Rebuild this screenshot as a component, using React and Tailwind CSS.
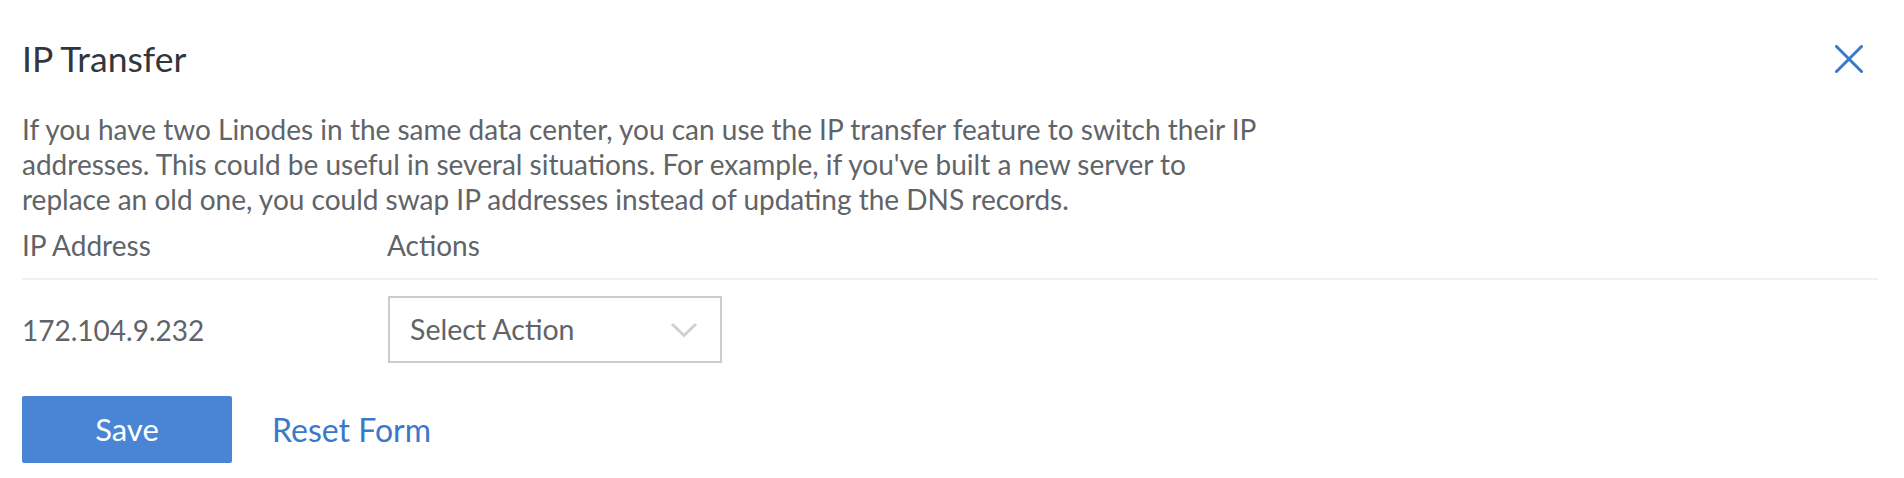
import React from "react";

export default function App() {
  return (
    <div className="w-[1904px] h-[478px] bg-white font-['Lato','Noto_Sans',sans-serif] pl-[22px] pr-[26px] pt-[37px]">
      <div className="flex items-center justify-between h-[44px]">
        <h2 className="text-[35.5px] leading-[44px] text-[#32363c] font-normal">IP Transfer</h2>
        <button className="w-[28px] h-[28px] mr-[15px] flex items-center justify-center">
          <svg width="28" height="28" viewBox="0 0 28 28" fill="none">
            <path d="M1.5 1.5 L26.5 26.5 M26.5 1.5 L1.5 26.5" stroke="#3a78c9" strokeWidth="3" strokeLinecap="round" />
          </svg>
        </button>
      </div>
      <p className="mt-[31px] text-[28px] leading-[35px] text-[#606469] whitespace-nowrap">
        If you have two Linodes in the same data center, you can use the IP transfer feature to switch their IP
        <br />
        addresses. This could be useful in several situations. For example, if you've built a new server to
        <br />
        replace an old one, you could swap IP addresses instead of updating the DNS records.
      </p>
      <div className="mt-[11px]">
        <div className="grid grid-cols-[365px_1fr] border-b-2 border-[#f0f0f0] h-[52px] items-start text-[28px] leading-[34px] text-[#606469]">
          <div>IP Address</div>
          <div>Actions</div>
        </div>
        <div className="grid grid-cols-[366px_1fr] items-center pt-[16px] pb-[17px] text-[#606469]">
          <div className="text-[28px]">172.104.9.232</div>
          <div className="w-[334px] h-[67px] border-2 border-[#cccccc] flex items-center justify-between pl-[20px] pr-[22px] text-[28.5px]">
            <span>Select Action</span>
            <svg width="28" height="16" viewBox="0 0 28 16" fill="none">
              <path d="M2 2 L14 13.5 L26 2" stroke="#d0d0d0" strokeWidth="3" />
            </svg>
          </div>
        </div>
      </div>
      <div className="flex items-center gap-[40px] mt-[16px]">
        <button className="w-[210px] h-[67px] bg-[#4a84d5] rounded-[2px] text-white text-[31px]">Save</button>
        <button className="text-[32px] text-[#3b78c9]">Reset Form</button>
      </div>
    </div>
  );
}
